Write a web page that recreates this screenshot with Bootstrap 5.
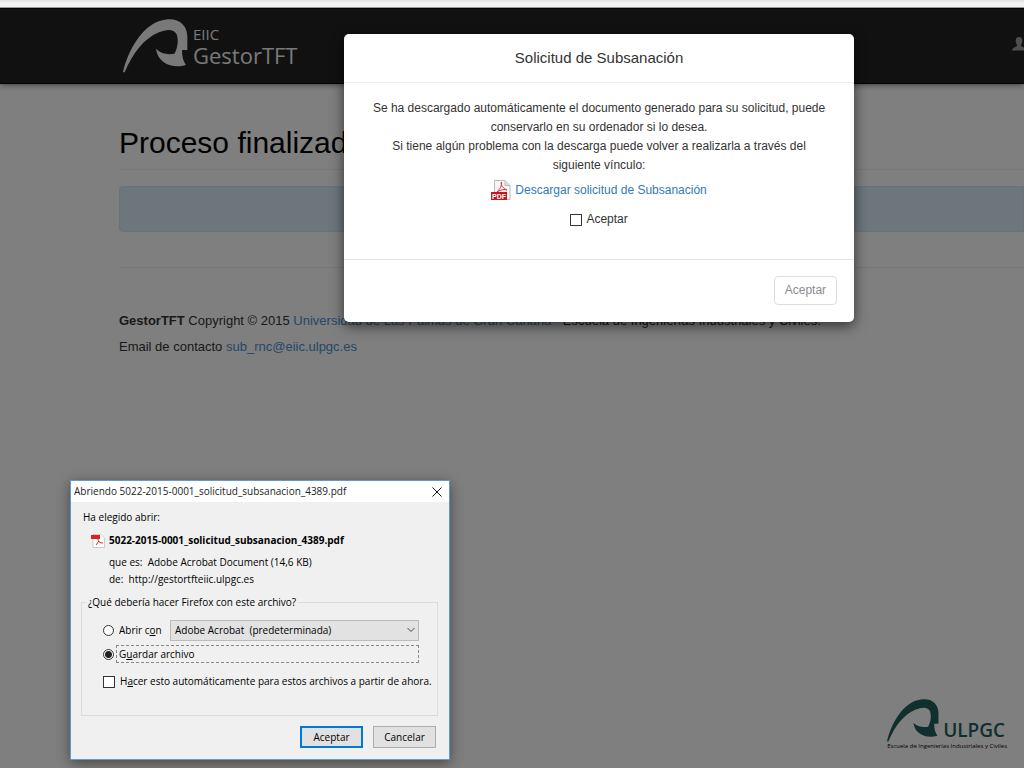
<!DOCTYPE html>
<html lang="es">
<head>
<meta charset="utf-8">
<meta name="viewport" content="width=device-width, initial-scale=1">
<title>GestorTFT - Proceso finalizado</title>
<link href="https://cdn.jsdelivr.net/npm/bootstrap@5.3.0/dist/css/bootstrap.min.css" rel="stylesheet">
<style>
  body { font-family: "Liberation Sans", Arial, sans-serif; font-size: 12px; line-height: 19px; color: #333; background: #fff; overflow: hidden; }
  a { color: #337ab7; text-decoration: none; }
  .browser-edge { height: 8px; background: #f1f1f1; border-top: 2px solid #e4e4e4; border-bottom: 1px solid #999; }
  .site { overflow: hidden; }
  .site-nav { height: 76px; background: #222; border-top: 1px solid #080808; border-bottom: 1px solid #080808; box-shadow: 0 1px 6px rgba(0,0,0,.5); }
  .indent { padding-left: 119px; }
  .brand-link { color: #fff; font-family: "Open Sans", sans-serif; gap: 5px; margin-left: 4px; opacity: .94; }
  .brand-small { font-size: 15px; line-height: 18px; }
  .brand-large { font-size: 22px; line-height: 24px; }
  .user-link { color: #9d9d9d; margin-right: -2px; padding-bottom: 4px; }
  .page-title { font-size: 30px; line-height: 32px; color: #000; padding-bottom: 10px; margin: 43px 0 16px; border-bottom: 1px solid #eee; }
  .notice { height: 46px; background: #d9edf7; border: 1px solid #cfe6f2; border-radius: 4px 0 0 4px; margin-bottom: 35px; }
  .site-foot { border-top: 1px solid #eee; padding-top: 43px; font-size: 13px; }
  .site-foot p { margin-bottom: 7px; }
  .site-foot a { color: #4a90cc; }
  .shade { inset: 0; background: rgba(0,0,0,.5); }
  .school { right: 17px; bottom: 18px; color: #225f5b; font-family: "Open Sans", sans-serif; }
  .school-name { font-size: 19px; line-height: 24px; font-weight: 600; }
  .school-sub { font-size: 6px; line-height: 8px; color: #000; }
  .notice-dialog { top: 26px; left: 33.6%; width: 510px; }
  .notice-dialog .modal-content { background: #fff; color: #333; border: 0; border-radius: 5px; box-shadow: 0 4px 13px rgba(0,0,0,.6); }
  .notice-dialog .modal-header { padding: 14px; border-bottom: 1px solid #eee; }
  .notice-dialog .modal-title { font-size: 15px; line-height: 20px; font-weight: 400; }
  .notice-dialog .modal-body { padding: 16px 24px 30px; }
  .notice-dialog .modal-footer { padding: 16px 17px 17px; border-top: 1px solid #e5e5e5; }
  .notice-text { margin-bottom: 5px; }
  .pdf-link { margin-bottom: 10px; }
  .tick { appearance: none; flex: none; width: 12px; height: 12px; margin: 0; background: #fff; border: 1px solid #333; }
  .ok-btn, .ok-btn:disabled { font-size: 12px; line-height: 19px; padding: 4px 10px; height: 29px; color: #8c8c8c; border: 1px solid #ddd; background: #fff; border-radius: 4px; opacity: 1; }
  .file-dialog { left: 70px; top: 472px; width: 380px; background: #f0f0f0; border: 1px solid #5d9bd0; box-shadow: 0 3px 12px rgba(0,0,0,.45); color: #000; font-family: "Open Sans", sans-serif; font-size: 10px; line-height: 17px; }
  .file-title { height: 21px; background: #fff; padding: 0 7px 0 3px; color: #222; }
  .close-btn { border: 0; padding: 0; background: none; line-height: 1; }
  .file-body { padding: 7px 11px 11px 12px; }
  .file-name { margin: 6px 0 5px; }
  .file-info { padding-left: 26px; }
  .choice { border: 1px solid #dcdcdc; height: 120px; margin: 0 0 10px -2px; padding: 9px 18px 0 21px; }
  .choice legend { float: none; width: auto; font-size: 10px; line-height: 12px; padding: 0 2px; margin: -15px 0 3px -17px; background: #f0f0f0; }
  .choice label { margin-left: 5px; }
  .save-row { margin-bottom: 10px; }
  .dot { appearance: none; flex: none; width: 11px; height: 11px; margin: 0; background: #fff; border: 1px solid #333; border-radius: 50%; }
  .dot:checked { background: radial-gradient(circle, #222 0 3px, #fff 4px); }
  .app-select { appearance: none; width: 249px; height: 21px; padding: 0 4px; font-size: 10px; color: #000; background: #e2e2e2; border: 1px solid #bbb; border-radius: 0; }
  .select-arrow { right: 4px; top: 7px; pointer-events: none; }
  .choice .focus-box { border: 1px dashed #888; height: 18px; margin-left: 2px; padding-left: 2px; line-height: 16px; }
  .win-actions { gap: 10px; padding-right: 2px; }
  .win-btn { width: 63px; height: 22px; padding: 0; border: 1px solid #adadad; background: #e1e1e1; font-size: 10px; color: #000; }
  .win-btn.primary-btn { border: 2px solid #0078d7; }
</style>
</head>
<body>
<svg class="d-none">
  <symbol id="ulpgc-mark" viewBox="69 57 197 163">
    <path fill="currentColor" d="M69 218C84 153 124 82 180 63C234 45 264 74 264 110V151H248Q247 178 260 196C224 208 174 194 169 147C184 162 204 166 225 162C237 139 237 116 231 102C222 85 199 88 178 97C130 117 99 161 74 218Z"/>
  </symbol>
</svg>
<div class="browser-edge"></div>
<div class="site position-relative" style="height:calc(100vh - 8px)">
  <nav class="site-nav indent d-flex align-items-center justify-content-between">
    <a href="#" class="brand-link d-flex align-items-center">
      <svg width="65" height="54"><use href="#ulpgc-mark"/></svg>
      <span class="d-flex flex-column"><span class="brand-small">EIIC</span><span class="brand-large">GestorTFT</span></span>
    </a>
    <a href="#" class="user-link" aria-label="Usuario">
      <svg width="14" height="14" viewBox="0 0 14 14" class="d-block"><path fill="currentColor" d="M7 0C9.500 0 10.500 2 10.300 4.500C10 6.500 9 7.500 8.800 8.500C9 10 13.500 10 14 13.500H0C.500 10 5 10 5.200 8.500C5 7.500 4 6.500 3.700 4.500C3.500 2 4.500 0 7 0Z"/></svg>
    </a>
  </nav>
  <main class="indent">
    <h1 class="page-title">Proceso finalizado</h1>
    <div class="notice"></div>
    <footer class="site-foot">
      <p><strong>GestorTFT</strong> Copyright © 2015 <a href="#">Universidad de Las Palmas de Gran Canaria</a> - Escuela de Ingenierías Industriales y Civiles.</p>
      <p>Email de contacto <a href="mailto:sub_rnc@eiic.ulpgc.es">sub_rnc@eiic.ulpgc.es</a></p>
    </footer>
  </main>
  <div class="school position-absolute">
    <div class="d-flex align-items-end gap-1"><svg width="52" height="43"><use href="#ulpgc-mark"/></svg><span class="school-name">ULPGC</span></div>
    <div class="school-sub">Escuela de Ingenierías Industriales y Civiles</div>
  </div>
  <div class="shade position-absolute"></div>

  <section class="notice-dialog position-absolute" role="dialog" aria-labelledby="dlg-title">
    <div class="modal-content">
      <div class="modal-header justify-content-center"><h2 class="modal-title" id="dlg-title">Solicitud de Subsanación</h2></div>
      <div class="modal-body text-center">
        <p class="notice-text">Se ha descargado automáticamente el documento generado para su solicitud, puede conservarlo en su ordenador si lo desea.<br>Si tiene algún problema con la descarga puede volver a realizarla a través del siguiente vínculo:</p>
        <a href="#" class="pdf-link d-flex justify-content-center align-items-center gap-1">
          <svg width="20" height="20" viewBox="0 0 20 20"><path fill="#f6f6f6" stroke="#bbb" d="M3.500.500H14L19 5.500V19.500H3.500Z"/><path fill="#ddd" stroke="#bbb" d="M14 .500V5.500H19"/><path fill="none" stroke="#d33" d="M10.500 2C9 5 13 9 16 10C12 8.500 8 11 6 12C9 9 11 6 10.500 2"/><path fill="#c8141b" d="M0 12H16V20H0Z"/><text x="1" y="19" font-size="7" font-weight="700" fill="#fff" font-family="Liberation Sans, sans-serif">PDF</text></svg>
          <span>Descargar solicitud de Subsanación</span>
        </a>
        <div class="d-flex justify-content-center align-items-center"><input class="tick me-1" type="checkbox" id="accept"><label for="accept">Aceptar</label></div>
      </div>
      <div class="modal-footer"><button type="button" class="btn ok-btn m-0" disabled>Aceptar</button></div>
    </div>
  </section>

  <section class="file-dialog position-absolute" role="dialog" aria-labelledby="file-title">
    <div class="file-title d-flex align-items-center justify-content-between">
      <span id="file-title">Abriendo 5022-2015-0001_solicitud_subsanacion_4389.pdf</span>
      <button type="button" class="close-btn" aria-label="Cerrar"><svg width="10" height="10" viewBox="0 0 10 10"><path stroke="#111" d="M.500.500L9.500 9.500M9.500.500L.500 9.500"/></svg></button>
    </div>
    <div class="file-body">
      <div>Ha elegido abrir:</div>
      <div class="file-name d-flex align-items-center gap-1 ps-2"><svg width="14" height="14" viewBox="0 0 14 14"><path fill="#fff" stroke="#ccc" d="M2 .500H10L13.500 4V13.500H2Z"/><path fill="#d8261c" d="M0 1H9V5H0Z"/><path fill="none" stroke="#d8261c" d="M7 5C7 8 9 9 12 9M8 7L5 11"/></svg><strong>5022-2015-0001_solicitud_subsanacion_4389.pdf</strong></div>
      <div class="file-info">que es:&nbsp; Adobe Acrobat Document (14,6 KB)</div>
      <div class="file-info mb-2">de:&nbsp; http://gestortfteiic.ulpgc.es</div>
      <fieldset class="choice">
        <legend>¿Qué debería hacer Firefox con este archivo?</legend>
        <div class="d-flex align-items-center mb-1">
          <input class="dot" type="radio" name="action" id="open"><label for="open" class="flex-grow-1">Abrir c<u>o</u>n</label>
          <span class="position-relative d-flex"><select class="app-select" aria-label="Aplicación"><option>Adobe Acrobat &nbsp;(predeterminada)</option></select><svg class="select-arrow position-absolute" width="8" height="6" viewBox="0 0 8 6"><path fill="none" stroke="#444" d="M.500 1L4 4.500L7.500 1"/></svg></span>
        </div>
        <div class="save-row d-flex align-items-center"><input class="dot" type="radio" name="action" id="save" checked><label for="save" class="focus-box flex-grow-1">G<u>u</u>ardar archivo</label></div>
        <div class="d-flex align-items-center"><input class="tick" type="checkbox" id="auto"><label for="auto" class="text-nowrap">H<u>a</u>cer esto automáticamente para estos archivos a partir de ahora.</label></div>
      </fieldset>
      <div class="win-actions d-flex justify-content-end"><button type="button" class="win-btn primary-btn">Aceptar</button><button type="button" class="win-btn">Cancelar</button></div>
    </div>
  </section>
</div>
<script src="https://cdn.jsdelivr.net/npm/bootstrap@5.3.0/dist/js/bootstrap.bundle.min.js"></script>
</body>
</html>
